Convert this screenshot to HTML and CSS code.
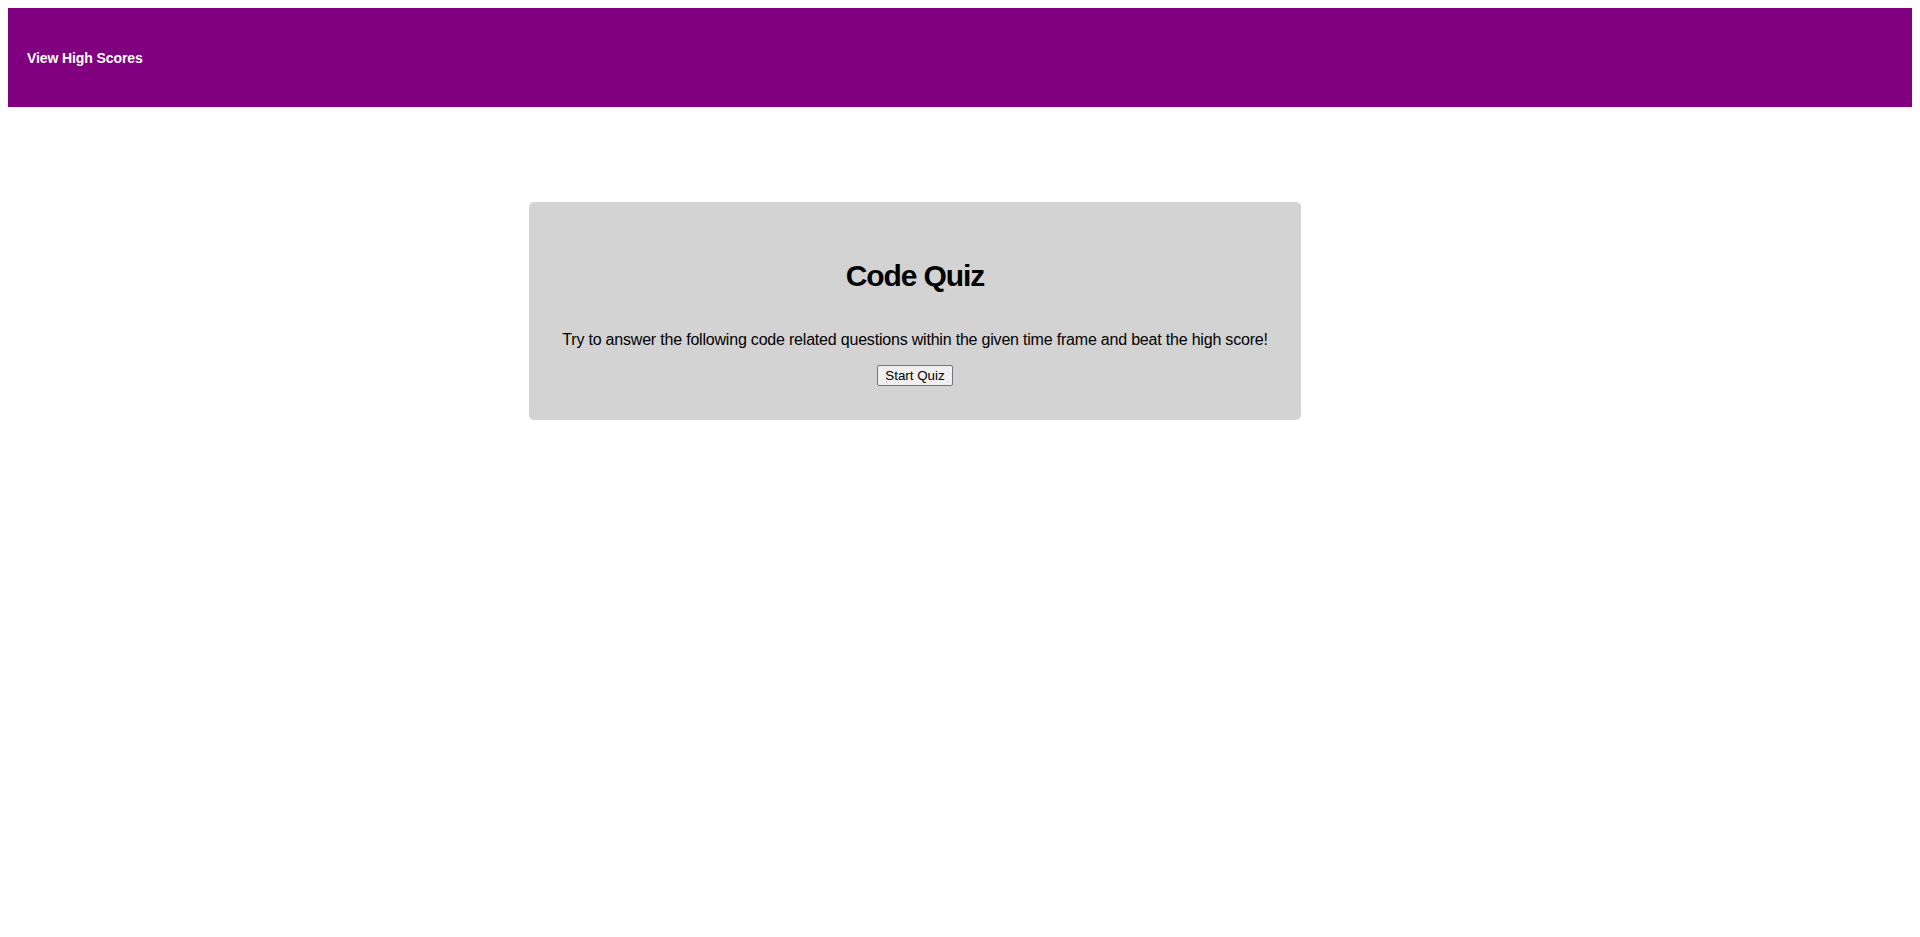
FILE: index.html
```html
<!DOCTYPE html>
<html>
<head>
<meta charset="utf-8">
<link rel="stylesheet" href="styles.css">
</head>
<body>
<header class="topbar">
  <a class="scores-link" href="#">View High Scores</a>
</header>
<main class="stage">
  <section class="card">
    <h1 class="title">Code Quiz</h1>
    <p class="intro">Try to answer the following code related questions within the given time frame and beat the high score!</p>
    <button class="start-btn" type="button">Start Quiz</button>
  </section>
</main>
</body>
</html>
```
FILE: styles.css
```css
body {
  margin: 8px;
  font-family: "Liberation Sans", Arial, sans-serif;
  color: #000;
  background: #fff;
}
.topbar {
  height: 99px;
  background: #800080;
  display: flex;
  align-items: center;
  padding-left: 19px;
}
.scores-link {
  color: #fff;
  text-decoration: none;
  font-weight: bold;
  font-size: 14px;
  letter-spacing: -0.1px;
  line-height: 18px;
}
.stage {
  padding-top: 95px;
}
.card {
  width: 772px;
  margin-left: 521px;
  background: #d3d3d3;
  border-radius: 5px;
  padding: 54px 0 34px;
  text-align: center;
}
.title {
  margin: 0;
  font-size: 30px;
  line-height: 40px;
  letter-spacing: -1.1px;
}
.intro {
  margin: 34px 0 15px;
  font-size: 16px;
  line-height: 20px;
  letter-spacing: -0.2px;
}
.start-btn {
  font-family: "Liberation Sans", Arial, sans-serif;
  font-size: 13.33px;
  height: 21px;
  padding: 1px 7px;
  background: #efefef;
  border: 1px solid #767676;
  border-radius: 2px;
  color: #000;
}
```
